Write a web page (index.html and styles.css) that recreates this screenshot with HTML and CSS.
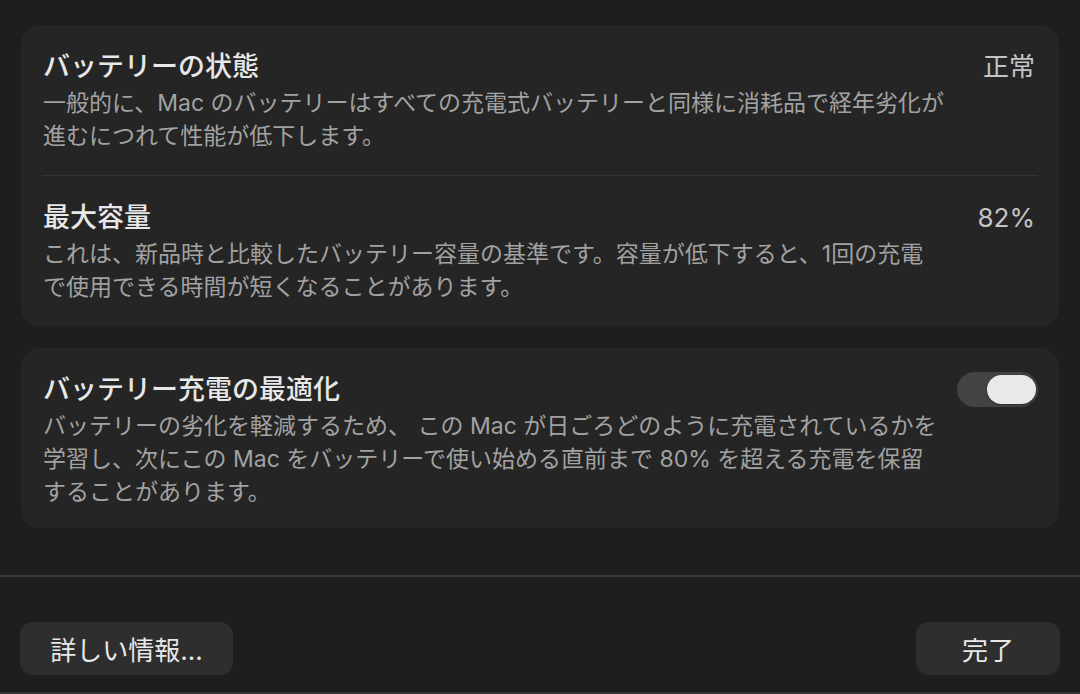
FILE: index.html
```html
<!DOCTYPE html>
<html lang="ja">
<head>
<meta charset="utf-8">
<title>バッテリーの状態</title>
<link rel="stylesheet" href="styles.css">
</head>
<body>
<div class="window">
  <main class="content">
    <section class="card">
      <div class="row">
        <div class="text">
          <div class="title">バッテリーの状態</div>
          <div class="desc">一般的に、Mac のバッテリーはすべての充電式バッテリーと同様に消耗品で経年劣化が<br>進むにつれて性能が低下します。</div>
        </div>
        <div class="value">正常</div>
      </div>
      <div class="divider"></div>
      <div class="row">
        <div class="text">
          <div class="title">最大容量</div>
          <div class="desc">これは、新品時と比較したバッテリー容量の基準です。容量が低下すると、1回の充電<br>で使用できる時間が短くなることがあります。</div>
        </div>
        <div class="value">82%</div>
      </div>
    </section>
    <section class="card">
      <div class="row row-last">
        <div class="text">
          <div class="title">バッテリー充電の最適化</div>
          <div class="desc">バッテリーの劣化を軽減するため、 この Mac が日ごろどのように充電されているかを<br>学習し、次にこの Mac をバッテリーで使い始める直前まで 80% を超える充電を保留<br>することがあります。</div>
        </div>
        <div class="toggle on"><span class="knob"></span></div>
      </div>
    </section>
  </main>
  <footer class="footer">
    <button class="btn btn-info">詳しい情報...</button>
    <button class="btn btn-done">完了</button>
  </footer>
</div>
</body>
</html>
```

FILE: styles.css
```css
* {
  box-sizing: border-box;
}

html, body {
  margin: 0;
  padding: 0;
  background: #1e1e1e;
}

body {
  font-family: Inter, "Noto Sans CJK JP", sans-serif;
  color: #e6e6e6;
  width: 1080px;
  height: 694px;
  overflow: hidden;
}

.window {
  height: 694px;
  display: flex;
  flex-direction: column;
  border-bottom: 2px solid #343434;
}

.content {
  display: flex;
  flex-direction: column;
  gap: 22px;
  padding: 25px 21px 0 21px;
}

.card {
  background: #252525;
  border-radius: 18px;
  display: flex;
  flex-direction: column;
}

.row {
  display: flex;
  justify-content: space-between;
  align-items: flex-start;
  padding: 23px 22px 22px 22px;
}

.row-last {
  padding-bottom: 19px;
}

.text {
  flex: 1;
  min-width: 0;
}

.title {
  font-size: 27px;
  line-height: 38px;
  font-weight: 500;
  color: #e8e8e8;
  white-space: nowrap;
}

.desc {
  margin-top: 1px;
  font-size: 23px;
  line-height: 33px;
  color: #a2a2a2;
  white-space: nowrap;
}

.value {
  font-size: 26px;
  line-height: 38px;
  color: #c4c4c4;
  padding-right: 2px;
  white-space: nowrap;
}

.divider {
  height: 1px;
  background: #353535;
  margin: 0 21px;
}

.toggle {
  width: 81px;
  height: 35px;
  border-radius: 18px;
  background: #434343;
  display: flex;
  align-items: center;
  justify-content: flex-end;
  padding: 0 2px;
  margin-top: 1px;
  margin-right: -1px;
}

.knob {
  width: 49px;
  height: 29px;
  border-radius: 15px;
  background: #e9e9e9;
  box-shadow: 0 1px 2px rgba(0, 0, 0, 0.35);
}

.footer {
  margin-top: 47px;
  border-top: 2px solid #383838;
  padding: 45px 20px 0 20px;
  display: flex;
  justify-content: space-between;
  align-items: flex-start;
}

.btn {
  font-family: Inter, "Noto Sans CJK JP", sans-serif;
  font-size: 26px;
  color: #e8e8e8;
  background: #2e2e2e;
  border: none;
  border-radius: 13px;
  height: 53px;
  padding: 0;
  display: flex;
  align-items: center;
  justify-content: center;
}

.btn-info {
  width: 213px;
}

.btn-done {
  width: 144px;
}
```
